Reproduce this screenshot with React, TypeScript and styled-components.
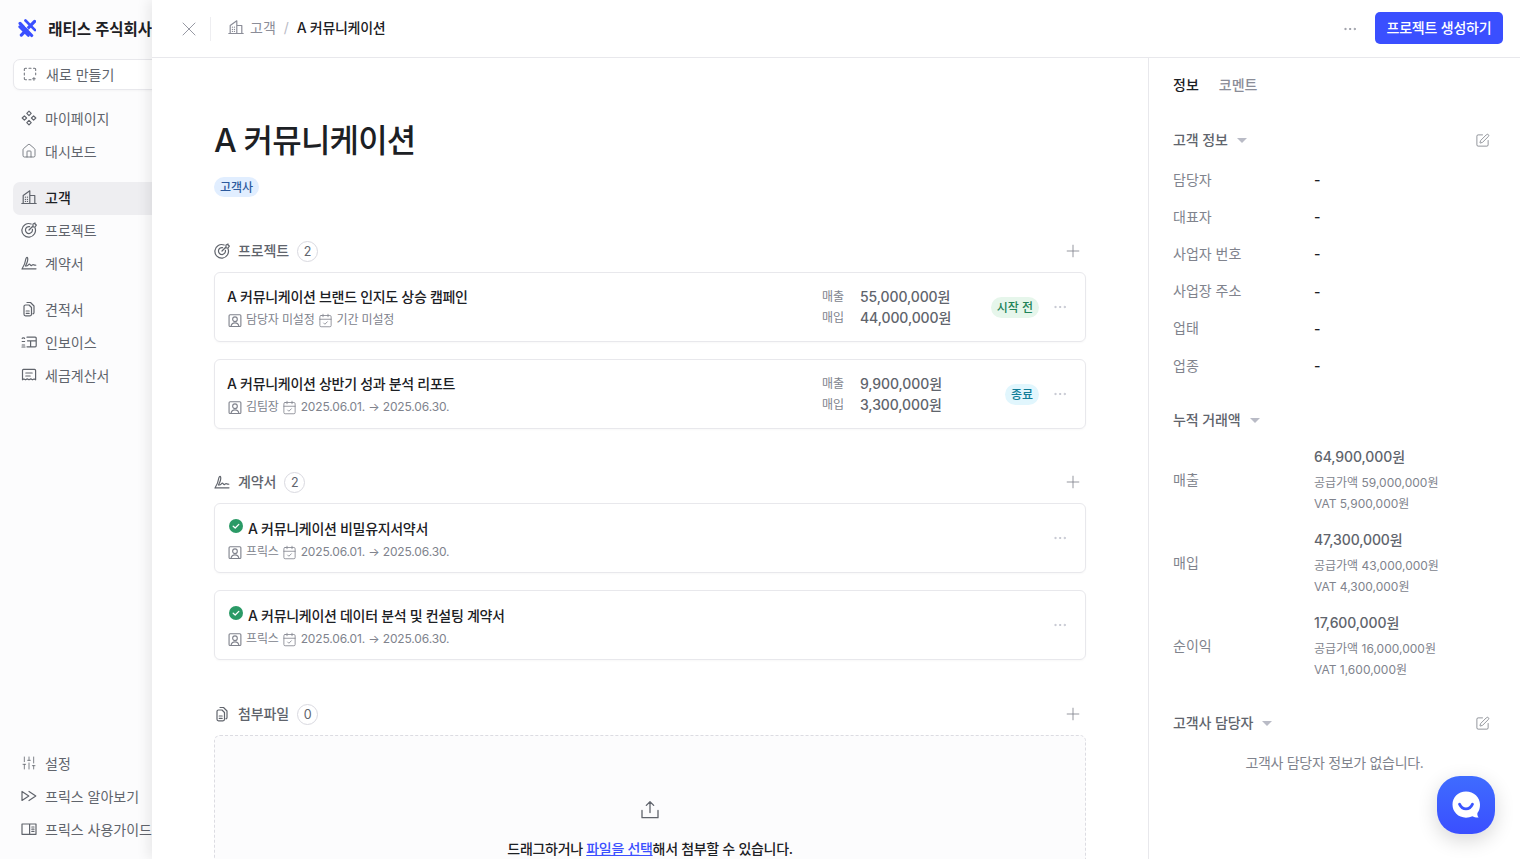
import React from "react";
import styled, { createGlobalStyle } from "styled-components";
import { X, Ellipsis, Plus, SquarePen, House, SlidersVertical, CalendarCheck } from "lucide-react";

const Global = createGlobalStyle`
  html, body { margin: 0; padding: 0; height: 100%; overflow: hidden; background: #fff; }
  body { font-family: Inter, "Noto Sans CJK KR", sans-serif; color: #1c2024; -webkit-font-smoothing: antialiased; }
  * { box-sizing: border-box; }
`;

const Shell = styled.div`
  display: flex;
  width: 1520px;
  height: 859px;
  overflow: hidden;
  position: relative;
`;

/* ---------- sidebar ---------- */
const Sidebar = styled.aside`
  width: 152px;
  flex: none;
  height: 100%;
  background: #fcfcfd;
  overflow: hidden;
  display: flex;
  flex-direction: column;
  padding-left: 13px;
`;
const Brand = styled.div`
  height: 58px;
  flex: none;
  display: flex;
  align-items: center;
  gap: 12px;
  padding: 0 0 2px 5px;
  font-size: 15.5px;
  font-weight: 600;
  white-space: nowrap;
`;
const NewButton = styled.div`
  height: 31px;
  width: 170px;
  flex: none;
  margin-top: 1px;
  border: 1px solid #e8e8ec;
  border-radius: 7px;
  background: #fff;
  display: flex;
  align-items: center;
  gap: 9px;
  padding: 0 0 2px 9px;
  font-size: 14px;
  color: #60646c;
  box-shadow: 0 1px 2px rgba(0, 0, 0, 0.03);
  svg { color: #70747c; }
`;
const NavGroup = styled.nav`
  display: flex;
  flex-direction: column;
  margin-top: 13px;
`;
const NavItem = styled.div<{ $active?: boolean }>`
  height: 33px;
  width: 170px;
  display: flex;
  align-items: center;
  gap: 8px;
  padding: 0 0 2.5px 8px;
  font-size: 14px;
  white-space: nowrap;
  border-radius: 7px;
  color: ${(p) => (p.$active ? "#1c2024" : "#60646c")};
  font-weight: ${(p) => (p.$active ? 500 : 400)};
  background: ${(p) => (p.$active ? "#eeeef1" : "transparent")};
  svg { color: #60646c; flex: none; }
`;
const Spacer = styled.div`
  flex: 1;
`;
const BottomNav = styled.nav`
  display: flex;
  flex-direction: column;
  margin-bottom: 12.5px;
`;

/* ---------- main panel ---------- */
const Panel = styled.div`
  flex: 1;
  min-width: 0;
  height: 100%;
  background: #fff;
  display: flex;
  flex-direction: column;
  box-shadow: -4px 0 12px rgba(0, 0, 0, 0.08);
  position: relative;
`;
const TopBar = styled.header`
  height: 58px;
  flex: none;
  border-bottom: 1px solid #e8e8ec;
  display: flex;
  align-items: center;
  padding: 0 17px 0 25px;
`;
const CloseBtn = styled.span`
  display: flex;
  color: #8b8d98;
  width: 33px;
`;
const Divider = styled.span`
  width: 1px;
  height: 24px;
  background: #eeeef1;
  margin-right: 17px;
`;
const Crumbs = styled.div`
  display: flex;
  align-items: center;
  font-size: 14px;
  flex: 1;
  gap: 6px;
`;
const CrumbMuted = styled.span`
  display: flex;
  color: #8b8d98;
  padding-bottom: 3px;
`;
const CrumbSep = styled.span`
  color: #b9bbc6;
  margin: 0 2px;
  padding-bottom: 3px;
`;
const CrumbNow = styled.span`
  font-weight: 500;
  color: #1c2024;
  letter-spacing: -0.3px;
  padding-bottom: 3px;
`;
const MoreBtn = styled.span<{ $light?: boolean }>`
  display: flex;
  color: ${(p) => (p.$light ? "#b9bbc6" : "#8b8d98")};
`;
const PrimaryBtn = styled.button`
  height: 32px;
  width: 128px;
  margin: 0 0 1px 17px;
  border: none;
  border-radius: 5px;
  background: #3a4fff;
  color: #fff;
  font: 500 14px Inter, "Noto Sans CJK KR", sans-serif;
  letter-spacing: -0.2px;
  padding: 0 0 2px;
`;
const Columns = styled.div`
  flex: 1;
  min-height: 0;
  display: flex;
`;
const Content = styled.main`
  flex: 1;
  min-width: 0;
  padding: 63px 62px 0;
  overflow: hidden;
`;
const Title = styled.h1`
  margin: 0;
  font-size: 32px;
  line-height: 40px;
  font-weight: 500;
  letter-spacing: -0.8px;
`;
const ClientTag = styled.span`
  display: flex;
  width: fit-content;
  align-items: center;
  height: 20px;
  margin-top: 16px;
  padding: 0 6px 1px;
  border-radius: 10px;
  background: #e1eeff;
  color: #2c5a9e;
  font-size: 12px;
  font-weight: 500;
`;
const Section = styled.section<{ $top: number }>`
  margin-top: ${(p) => p.$top}px;
`;
const SectionHead = styled.div`
  height: 22px;
  display: flex;
  align-items: center;
  gap: 8px;
  font-size: 14px;
  font-weight: 500;
  color: #60646c;
  margin-bottom: 10px;
  svg { flex: none; }
`;
const HeadText = styled.span`
  padding-bottom: 2px;
  letter-spacing: -0.1px;
`;
const Count = styled.span`
  width: 21px;
  height: 21px;
  border: 1px solid #d9d9e0;
  border-radius: 50%;
  display: flex;
  align-items: center;
  justify-content: center;
  font-size: 12.5px;
  font-weight: 400;
  color: #60646c;
`;
const AddBtn = styled.span`
  margin-left: auto;
  margin-right: 3px;
  display: flex;
  color: #80838d;
`;
const Cards = styled.div`
  display: flex;
  flex-direction: column;
  gap: 17px;
`;
const Card = styled.article`
  height: 70px;
  border: 1px solid #e8e8ec;
  border-radius: 6px;
  box-shadow: 0 1px 2px rgba(0, 0, 0, 0.03);
  display: flex;
  align-items: center;
  padding: 0 17px 0 12px;
`;
const CardInfo = styled.div<{ $low?: boolean }>`
  flex: 1;
  min-width: 0;
  display: flex;
  flex-direction: column;
  gap: 3px;
  padding-top: ${(p) => (p.$low ? 5 : 3)}px;
`;
const CardTitle = styled.div`
  font-size: 14px;
  line-height: 20px;
  font-weight: 500;
  letter-spacing: -0.3px;
  display: flex;
  align-items: center;
  gap: 5px;
`;
const CheckDot = styled.span`
  display: flex;
  margin: -6px 0 0 2px;
`;
const CardMeta = styled.div`
  display: flex;
  align-items: center;
  font-size: 12px;
  line-height: 20px;
  letter-spacing: -0.15px;
  color: #80838d;
  gap: 4px;
  svg { color: #80838d; flex: none; }
  svg + span + svg { margin-left: -1px; }
`;
const Amounts = styled.div`
  width: 170px;
  margin-top: 1px;
  display: grid;
  grid-template-columns: 38px 1fr;
  align-items: center;
`;
const AmountLabel = styled.span`
  font-size: 12px;
  line-height: 20.5px;
  color: #80838d;
`;
const AmountValue = styled.span`
  font-size: 14px;
  line-height: 20.5px;
  font-weight: 500;
  letter-spacing: -0.1px;
  color: #60646c;
`;
const BadgeSlot = styled.div`
  width: 47px;
  display: flex;
  justify-content: flex-end;
  margin-right: 13px;
`;
const Badge = styled.span<{ $tone: "green" | "blue" }>`
  height: 21px;
  padding: 0 6px 1px;
  display: inline-flex;
  align-items: center;
  white-space: nowrap;
  border-radius: 11px;
  font-size: 12px;
  font-weight: 500;
  background: ${(p) => (p.$tone === "green" ? "#e6f6eb" : "#e1f6fd")};
  color: ${(p) => (p.$tone === "green" ? "#218358" : "#107d98")};
`;
const Dropzone = styled.div`
  height: 220px;
  border: 1px dashed #dcdce2;
  border-radius: 6px;
  background: #fcfcfd;
  display: flex;
  flex-direction: column;
  align-items: center;
  padding-top: 64px;
  font-size: 14px;
  font-weight: 500;
  letter-spacing: -0.3px;
  color: #1c2024;
  gap: 18px;
  svg { color: #60646c; }
`;
const DropLink = styled.a`
  color: #3a4fff;
  text-decoration: underline;
`;

/* ---------- right panel ---------- */
const Aside = styled.aside`
  width: 372px;
  flex: none;
  border-left: 1px solid #e8e8ec;
  padding: 17px 30px 0 24px;
  position: relative;
  overflow: hidden;
`;
const Tabs = styled.div`
  display: flex;
  gap: 20px;
  font-size: 14px;
  line-height: 20px;
`;
const Tab = styled.span<{ $active?: boolean }>`
  font-weight: 500;
  color: ${(p) => (p.$active ? "#1c2024" : "#8b8d98")};
`;
const AsideHead = styled.div<{ $top: number; $bottom: number }>`
  display: flex;
  align-items: center;
  height: 20px;
  margin-top: ${(p) => p.$top}px;
  margin-bottom: ${(p) => p.$bottom}px;
  font-size: 14px;
  font-weight: 500;
  color: #60646c;
  gap: 9px;
`;
const Caret = styled.span`
  width: 0;
  height: 0;
  border-left: 5px solid transparent;
  border-right: 5px solid transparent;
  border-top: 5px solid #b9bbc6;
`;
const EditBtn = styled.span`
  margin-left: auto;
  display: flex;
  color: #70747c;
`;
const FieldRow = styled.div`
  display: grid;
  grid-template-columns: 141px 1fr;
  height: 37.2px;
  align-items: center;
  font-size: 14px;
`;
const FieldLabel = styled.span<{ $lift?: number }>`
  color: #80838d;
  padding-bottom: ${(p) => p.$lift ?? 2}px;
`;
const FieldValue = styled.span`
  color: #1c2024;
  font-weight: 500;
`;
const MoneyRow = styled.div`
  display: grid;
  grid-template-columns: 141px 1fr;
  height: 83px;
  align-items: center;
  font-size: 14px;
`;
const MoneyBlock = styled.div`
  display: flex;
  flex-direction: column;
`;
const MoneyTotal = styled.span`
  font-size: 14px;
  line-height: 20px;
  font-weight: 500;
  letter-spacing: -0.1px;
  color: #60646c;
  margin-bottom: 5px;
`;
const MoneySub = styled.span`
  font-size: 12px;
  line-height: 21px;
  color: #80838d;
`;
const EmptyNote = styled.div`
  text-align: center;
  font-size: 14px;
  line-height: 20px;
  letter-spacing: -0.3px;
  color: #80838d;
  margin-top: 20px;
  padding-left: 6px;
`;
const Fab = styled.div`
  position: absolute;
  left: 288px;
  top: 718px;
  width: 58px;
  height: 58px;
  border-radius: 23px;
  background: linear-gradient(180deg, #3f6cff, #3a4fff);
  box-shadow: 0 6px 20px rgba(0, 0, 0, 0.16);
  display: flex;
  align-items: center;
  justify-content: center;
`;

/* ---------- icons ---------- */
const Svg: React.FC<{ size?: number; sw?: number; children: React.ReactNode }> = ({ size = 16, sw = 1.2, children }) => (
  <svg width={size} height={size} viewBox="0 0 16 16" fill="none" stroke="currentColor" strokeWidth={sw} strokeLinecap="round" strokeLinejoin="round">
    {children}
  </svg>
);
const Logo = () => (
  <svg width="22" height="22" viewBox="0 0 22 22" fill="none" strokeLinecap="round">
    <path d="M2.500 5.500 L16.500 20" stroke="#3a4fff" strokeWidth="3.800" />
    <path d="M20 3 L4 19.500" stroke="#3a4fff" strokeWidth="3.800" />
    <path d="M9 2 L20.500 13.500" stroke="#3a4fff" strokeWidth="3.200" />
    <path d="M2 9.500 L12.500 20" stroke="#3a4fff" strokeWidth="3.200" />
    <path d="M9 9 L12.500 12.500" stroke="#fcfcfd" strokeWidth="0.800" />
  </svg>
);
const DashedNew = () => (
  <Svg size={14}>
    <path d="M1.500 4V2.800A1.300 1.300 0 0 1 2.800 1.500H4M6.800 1.500h2.400M12 1.500h1.200a1.300 1.300 0 0 1 1.300 1.300V4M14.500 6.800v2M1.500 6.800v2.400M1.500 12v1.200a1.300 1.300 0 0 0 1.300 1.300H4M6.800 14.500h2.400M12.500 12v3M11 13.500h3" />
  </Svg>
);
const Diamonds = () => (
  <Svg size={16}>
    <path d="M8 1.200 10.200 3.400 8 5.600 5.800 3.400zM8 10.400l2.200 2.200L8 14.800l-2.200-2.200zM3.400 5.800 5.600 8 3.400 10.200 1.200 8zM12.600 5.800 14.800 8l-2.200 2.200L10.400 8z" />
  </Svg>
);
const Building = () => (
  <Svg size={16}>
    <path d="M.8 14.500h14.400M2.200 14.500V6.500L8.800 1.800v12.700M8.800 6.500h5v8M4.400 8.200h.1M6.400 8.200h.1M4.400 10.400h.1M6.400 10.400h.1M4.400 12.400h.1M6.400 12.400h.1" />
  </Svg>
);
const TargetIcon = () => (
  <Svg size={16}>
    <path d="M14 5.800A6.800 6.800 0 1 1 10.200 2M11.400 7.400A3.500 3.500 0 1 1 8.600 4.600M8 8l4-4M12 4V2l2-1 .3 1.700 1.200.3-1.500 2h-2z" />
  </Svg>
);
const SignatureIcon = () => (
  <Svg size={16}>
    <path d="M1 14c2-3 3.300-6.500 3.700-9.500.3-2 1.700-2.800 2-1.200.3 1.600-.8 5-2.300 7.700M5.400 11c1.800-.2 2.300-2.400 3.300-1.800s.9 1.800 1.900 1.200 1-1 2-.6 1.400.6 2.200.4M1.800 13.800h13.200" />
  </Svg>
);
const StackDoc = () => (
  <Svg size={16}>
    <path d="M3 5.500A1.500 1.500 0 0 1 4.500 4H8l2.500 2.500v6.800A1.500 1.500 0 0 1 9 14.800H4.500A1.500 1.500 0 0 1 3 13.300zM6 1.500h3.500L13 5v6.500a1.500 1.500 0 0 1-1 1.400M5.200 10h3M5.200 12.300h3" />
  </Svg>
);
const InvoiceIcon = () => (
  <Svg size={16}>
    <path d="M1.200 4.500c0-1 2.400-1 2.400 0M3.600 7.500h-2.400M1.200 11h2.400M1 13h3M6 3.200h8.200a1 1 0 0 1 1 1v7.600a1 1 0 0 1-1 1H6M6.500 6.800h8.500M9.600 6.800v6" />
  </Svg>
);
const ReceiptIcon = () => (
  <Svg size={16}>
    <path d="M2.400 2.400h11.200a1 1 0 0 1 1 1v9.400l-1.500-.9-1.600.9-1.700-.9-1.800.9-1.800-.9-1.700.9-1.600-.9-1.400.9V3.400a1 1 0 0 1 1-1zM4.800 6h6.400M4.800 9h4.400" />
  </Svg>
);
const DoublePlay = () => (
  <Svg size={16}>
    <path d="M1 3.500v9L7.800 8zM8 3.500 14.800 8 8 12.500" />
  </Svg>
);
const Book = () => (
  <Svg size={16}>
    <path d="M8.600 3H1v10.300h7.600M8.600 3h6.400v10.300H8.600zM10.800 6h2.200M10.800 8.200h2.200M10.800 10.400h2.200" />
  </Svg>
);
const Contact = () => (
  <Svg size={15}>
    <rect x="2.200" y="1.800" width="12.600" height="12.600" rx="1.200" />
    <circle cx="8.500" cy="6.600" r="2.500" />
    <path d="M4.300 14.200c.4-2.600 2-3.700 4.200-3.700s3.800 1.100 4.200 3.700" />
  </Svg>
);
const Check = () => (
  <svg width="14" height="14" viewBox="0 0 14 14">
    <circle cx="7" cy="7" r="7" fill="#2b9a66" />
    <path d="M4.200 7.200 6.200 9l3.600-3.600" fill="none" stroke="#fff" strokeWidth="1.300" strokeLinecap="round" strokeLinejoin="round" />
  </svg>
);
const UploadIcon = () => (
  <svg width="20" height="20" viewBox="0 0 20 20" fill="none" stroke="currentColor" strokeWidth="1.300" strokeLinecap="round" strokeLinejoin="round">
    <path d="M10 12.500V2M6.300 5.400 10 1.800l3.700 3.600M2 10.500v7.200h16v-7.200" />
  </svg>
);
const ChatBubble = () => (
  <svg width="32" height="32" viewBox="0 0 32 32">
    <path d="M16 2.500C8.200 2.500 2.500 8.300 2.500 15.600S8.200 28.700 16 28.700c2.300 0 4.500-.5 6.400-1.400 1.800 1 4.100 1.400 6.200 1.200-1-1-1.400-2.400-1.200-4.400 1.800-2.300 2.600-5.200 2.600-8.500C30 8.300 23.800 2.500 16 2.500z" fill="#fff" />
    <path d="M9.500 15.200c1.500 3.200 3.800 4.700 6.500 4.700s5-1.500 6.500-4.700" fill="none" stroke="#3a55ff" strokeWidth="2.800" strokeLinecap="round" />
  </svg>
);

const Meta: React.FC<{ who: string; when: string }> = ({ who, when }) => (
  <CardMeta>
    <Contact />
    <span>{who}</span>
    <CalendarCheck size={15} strokeWidth={1.3} />
    <span>{when}</span>
  </CardMeta>
);

const projects = [
  { title: "A 커뮤니케이션 브랜드 인지도 상승 캠페인", who: "담당자 미설정", when: "기간 미설정", sales: "55,000,000원", buy: "44,000,000원", status: "시작 전", tone: "green" as const },
  { title: "A 커뮤니케이션 상반기 성과 분석 리포트", who: "김팀장", when: "2025.06.01. → 2025.06.30.", sales: "9,900,000원", buy: "3,300,000원", status: "종료", tone: "blue" as const },
];
const contracts = ["A 커뮤니케이션 비밀유지서약서", "A 커뮤니케이션 데이터 분석 및 컨설팅 계약서"];
const fields = ["담당자", "대표자", "사업자 번호", "사업장 주소", "업태", "업종"];
const money = [
  { label: "매출", total: "64,900,000원", supply: "공급가액 59,000,000원", vat: "VAT 5,900,000원" },
  { label: "매입", total: "47,300,000원", supply: "공급가액 43,000,000원", vat: "VAT 4,300,000원" },
  { label: "순이익", total: "17,600,000원", supply: "공급가액 16,000,000원", vat: "VAT 1,600,000원" },
];

export default function App() {
  return (
    <Shell>
      <Global />
      <Sidebar>
        <Brand>
          <Logo />
          래티스 주식회사
        </Brand>
        <NewButton>
          <DashedNew />
          새로 만들기
        </NewButton>
        <NavGroup>
          <NavItem><Diamonds />마이페이지</NavItem>
          <NavItem><House size={16} strokeWidth={1.2} />대시보드</NavItem>
        </NavGroup>
        <NavGroup>
          <NavItem $active><Building />고객</NavItem>
          <NavItem><TargetIcon />프로젝트</NavItem>
          <NavItem><SignatureIcon />계약서</NavItem>
        </NavGroup>
        <NavGroup>
          <NavItem><StackDoc />견적서</NavItem>
          <NavItem><InvoiceIcon />인보이스</NavItem>
          <NavItem><ReceiptIcon />세금계산서</NavItem>
        </NavGroup>
        <Spacer />
        <BottomNav>
          <NavItem><SlidersVertical size={16} strokeWidth={1.2} />설정</NavItem>
          <NavItem><DoublePlay />프릭스 알아보기</NavItem>
          <NavItem><Book />프릭스 사용가이드</NavItem>
        </BottomNav>
      </Sidebar>
      <Panel>
        <TopBar>
          <CloseBtn><X size={24} strokeWidth={0.9} /></CloseBtn>
          <Divider />
          <Crumbs>
            <CrumbMuted><Building /></CrumbMuted>
            <CrumbMuted>고객</CrumbMuted>
            <CrumbSep>/</CrumbSep>
            <CrumbNow>A 커뮤니케이션</CrumbNow>
          </Crumbs>
          <MoreBtn><Ellipsis size={16} strokeWidth={1.3} /></MoreBtn>
          <PrimaryBtn>프로젝트 생성하기</PrimaryBtn>
        </TopBar>
        <Columns>
          <Content>
            <Title>A 커뮤니케이션</Title>
            <ClientTag>고객사</ClientTag>
            <Section $top={43}>
              <SectionHead>
                <TargetIcon /><HeadText>프로젝트</HeadText><Count>2</Count>
                <AddBtn><Plus size={20} strokeWidth={1} /></AddBtn>
              </SectionHead>
              <Cards>
                {projects.map((p) => (
                  <Card key={p.title}>
                    <CardInfo>
                      <CardTitle>{p.title}</CardTitle>
                      <Meta who={p.who} when={p.when} />
                    </CardInfo>
                    <Amounts>
                      <AmountLabel>매출</AmountLabel>
                      <AmountValue>{p.sales}</AmountValue>
                      <AmountLabel>매입</AmountLabel>
                      <AmountValue>{p.buy}</AmountValue>
                    </Amounts>
                    <BadgeSlot><Badge $tone={p.tone}>{p.status}</Badge></BadgeSlot>
                    <MoreBtn $light><Ellipsis size={16} strokeWidth={1.2} /></MoreBtn>
                  </Card>
                ))}
              </Cards>
            </Section>
            <Section $top={42}>
              <SectionHead>
                <SignatureIcon /><HeadText>계약서</HeadText><Count>2</Count>
                <AddBtn><Plus size={20} strokeWidth={1} /></AddBtn>
              </SectionHead>
              <Cards>
                {contracts.map((c) => (
                  <Card key={c}>
                    <CardInfo $low>
                      <CardTitle><CheckDot><Check /></CheckDot>{c}</CardTitle>
                      <Meta who="프릭스" when="2025.06.01. → 2025.06.30." />
                    </CardInfo>
                    <MoreBtn $light><Ellipsis size={16} strokeWidth={1.2} /></MoreBtn>
                  </Card>
                ))}
              </Cards>
            </Section>
            <Section $top={43}>
              <SectionHead>
                <StackDoc /><HeadText>첨부파일</HeadText><Count>0</Count>
                <AddBtn><Plus size={20} strokeWidth={1} /></AddBtn>
              </SectionHead>
              <Dropzone>
                <UploadIcon />
                <span>드래그하거나 <DropLink>파일을 선택</DropLink>해서 첨부할 수 있습니다.</span>
              </Dropzone>
            </Section>
          </Content>
          <Aside>
            <Tabs>
              <Tab $active>정보</Tab>
              <Tab>코멘트</Tab>
            </Tabs>
            <AsideHead $top={35} $bottom={11}>
              <HeadText>고객 정보</HeadText><Caret />
              <EditBtn><SquarePen size={15} strokeWidth={1.2} /></EditBtn>
            </AsideHead>
            {fields.map((f) => (
              <FieldRow key={f}>
                <FieldLabel>{f}</FieldLabel>
                <FieldValue>-</FieldValue>
              </FieldRow>
            ))}
            <AsideHead $top={26} $bottom={9}><HeadText>누적 거래액</HeadText><Caret /></AsideHead>
            {money.map((m) => (
              <MoneyRow key={m.label}>
                <FieldLabel $lift={4}>{m.label}</FieldLabel>
                <MoneyBlock>
                  <MoneyTotal>{m.total}</MoneyTotal>
                  <MoneySub>{m.supply}</MoneySub>
                  <MoneySub>{m.vat}</MoneySub>
                </MoneyBlock>
              </MoneyRow>
            ))}
            <AsideHead $top={25} $bottom={10}>
              <HeadText>고객사 담당자</HeadText><Caret />
              <EditBtn><SquarePen size={15} strokeWidth={1.2} /></EditBtn>
            </AsideHead>
            <EmptyNote>고객사 담당자 정보가 없습니다.</EmptyNote>
            <Fab><ChatBubble /></Fab>
          </Aside>
        </Columns>
      </Panel>
    </Shell>
  );
}
